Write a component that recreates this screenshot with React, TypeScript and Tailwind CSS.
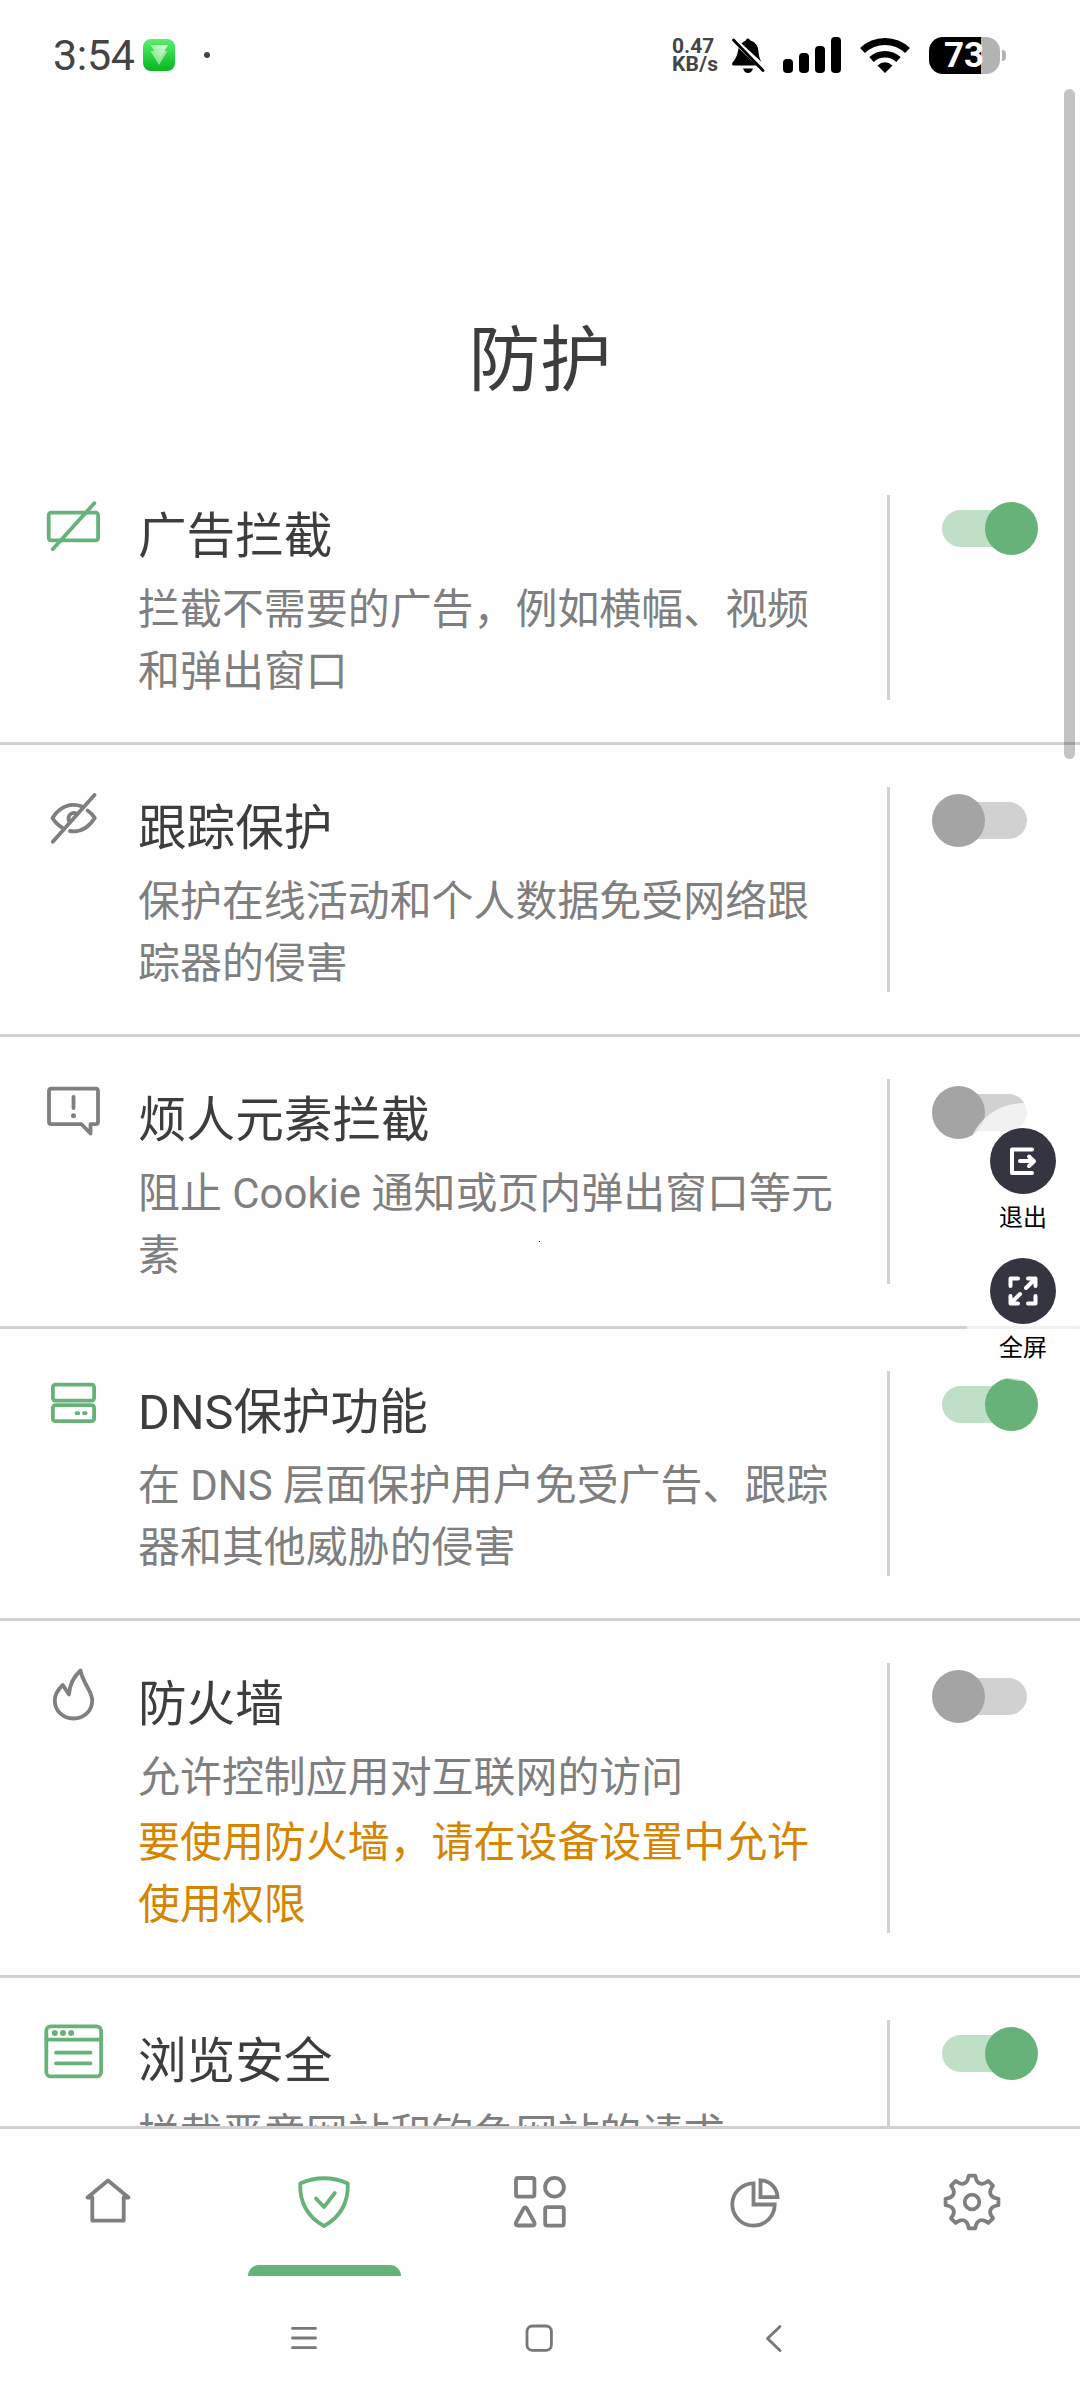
import { useState } from "react";
import type { ReactNode } from "react";

type Protection = {
    id: string;
    title: string;
    text: string;
    warning?: string;
    enabled: boolean;
    icon: ReactNode;
};

// 8 tooth outline, centered on 0,0
const gearPath = Array.from({ length: 8 }, (_, i) => {
    const point = (r: number, deg: number) => {
        const a = ((i * 45 + deg - 90) * Math.PI) / 180;
        return `${(r * Math.cos(a)).toFixed(2)} ${(r * Math.sin(a)).toFixed(2)}`;
    };
    return `${i === 0 ? "M" : "L"}${point(21, -15)} Q${point(22, -11)} ${point(26.6, -7)} L${point(26.6, 7)} Q${point(22, 11)} ${point(21, 15)} Q${point(19.4, 22.5)} ${point(21, 30)}`;
}).join(" ") + "Z";

const protections: Protection[] = [
    {
        id: "ads",
        title: "广告拦截",
        text: "拦截不需要的广告，例如横幅、视频\n和弹出窗口",
        enabled: true,
        icon: (
            <>
                <rect x="4.700" y="15.700" width="49.400" height="27.600" rx="2.500" />
                <path d="M8.700 52.200L50.300 6.200" />
            </>
        ),
    },
    {
        id: "tracking",
        title: "跟踪保护",
        text: "保护在线活动和个人数据免受网络跟\n踪器的侵害",
        enabled: false,
        icon: (
            <>
                <path d="M38 17.5C27 13.5 16 17 8.5 29C11 33 14 36.300 18 38.500" />
                <path d="M43.500 21.500C46.500 23.500 49 26 50.800 29C44 39.500 35.500 43.500 26 42" />
                <path d="M33 25C28.500 22 23 26 25 32" />
                <path d="M8.800 52.800L50.500 6" />
            </>
        ),
    },
    {
        id: "annoyances",
        title: "烦人元素拦截",
        text: "阻止 Cookie 通知或页内弹出窗口等元\n素",
        enabled: false,
        icon: (
            <>
                <path d="M7.500 7.700H51.500Q54 7.700 54 10.200V40.700Q54 43.200 51.500 43.200H46.500V52.500L37.500 43.200H7.500Q5 43.200 5 40.700V10.200Q5 7.700 7.500 7.700Z" />
                <path d="M29.500 16V27" />
                <circle cx="29.500" cy="34.700" r="2.500" fill="currentColor" stroke="none" />
            </>
        ),
    },
    {
        id: "dns",
        title: "DNS保护功能",
        text: "在 DNS 层面保护用户免受广告、跟踪\n器和其他威胁的侵害",
        enabled: true,
        icon: (
            <>
                <rect x="8.900" y="11.600" width="41.200" height="16" rx="2.500" />
                <rect x="8.900" y="32.200" width="41.200" height="16" rx="2.500" />
                <path d="M32.500 40.200H34.200M40 40.200H41.700" />
            </>
        ),
    },
    {
        id: "firewall",
        title: "防火墙",
        text: "允许控制应用对互联网的访问",
        warning: "要使用防火墙，请在设备设置中允许\n使用权限",
        enabled: false,
        icon: (
            <path d="M36.500 5.500C30 11.500 25.500 19.500 25 29.500L18.800 20C13.500 25 10.800 30 10.800 35.500C10.800 46 19 53.500 29.500 53.500C40 53.500 48.200 46 48.200 35.500C48.200 25.500 39.500 20 36.500 5.500Z" />
        ),
    },
    {
        id: "browsing",
        title: "浏览安全",
        text: "拦截恶意网站和钓鱼网站的请求",
        enabled: true,
        icon: (
            <>
                <rect x="2.300" y="4.400" width="54.800" height="50" rx="4.500" />
                <path d="M2.300 17.700H57M12 30.700H46.500M12 41.300H46.500" />
                <g fill="currentColor" stroke="none">
                    <circle cx="10.800" cy="11" r="3" />
                    <circle cx="19" cy="11" r="3" />
                    <circle cx="27.200" cy="11" r="3" />
                </g>
            </>
        ),
    },
];

const tabs: { id: string; icon: ReactNode }[] = [
    {
        id: "home",
        icon: <path d="M-15.700 -4.500H-20.500L0 -21.500L20.500 -4.500H15.700V18.700H-15.700Z" />,
    },
    {
        id: "protection",
        icon: (
            <>
                <path d="M-23.800 -18.500Q0 -29 23.800 -18.500C24.500 1 17 14.500 0 24C-17 14.500 -24.500 1 -23.800 -18.500Z" />
                <path d="M-8 -3.500L0 5L10.800 -9" />
            </>
        ),
    },
    {
        id: "apps",
        icon: (
            <>
                <rect x="-24" y="-24" width="18.400" height="18.600" rx="2" />
                <circle cx="14.500" cy="-14.700" r="9.400" />
                <path d="M-16.600 6.800Q-14.800 3.800 -13 6.800L-5.800 20Q-4.500 23.500 -7.500 23.500H-22Q-25.200 23.500 -23.800 20Z" />
                <rect x="5.200" y="5.100" width="18.600" height="18.500" rx="2" />
            </>
        ),
    },
    {
        id: "stats",
        icon: (
            <g strokeLinejoin="miter">
                <path d="M-2.500 -18.700A21.200 21.200 0 1 0 18.700 2.500H-2.500Z" />
                <path d="M4.500 -21.700A17.300 17.300 0 0 1 21.500 -4.800H4.500Z" />
            </g>
        ),
    },
    {
        id: "settings",
        icon: (
            <>
                <path d={gearPath} />
                <circle r="7.300" />
            </>
        ),
    },
];

function Switch({ on, onClick }: { on: boolean; onClick: () => void }) {
    return (
        <button
            type="button"
            role="switch"
            aria-checked={on}
            onClick={onClick}
            className={`flex items-center w-[85px] h-[37px] rounded-full ${on ? "justify-end bg-[#bfdfc7]" : "justify-start bg-[#d1d1d1]"}`}
        >
            <span className={`w-[53px] h-[53px] shrink-0 rounded-full ${on ? "-mr-[11px] bg-[#67b279]" : "-ml-[10px] bg-[#a4a4a4]"}`} />
        </button>
    );
}

function StatusBar() {
    return (
        <header className="flex items-center h-[110px] pl-[53px] pr-[74px] text-[#444444]">
            <span className="w-[90px] text-[43px] leading-none tracking-[-0.3px]">3:54</span>
            <svg className="w-8 h-8" viewBox="0 0 32 32">
                <defs>
                    <linearGradient id="appBg" x1="0" y1="0" x2="0" y2="1">
                        <stop offset="0" stopColor="#5af06c" />
                        <stop offset="1" stopColor="#05b51e" />
                    </linearGradient>
                    <linearGradient id="arrow" x1="1" y1="0" x2="0.2" y2="1">
                        <stop offset="0" stopColor="#ffffff" />
                        <stop offset="1" stopColor="#7fe98b" />
                    </linearGradient>
                </defs>
                <rect width="32" height="32" rx="8" fill="url(#appBg)" />
                <path d="M7.500 12H24.500L16 26Z" fill="#ffffff" opacity="0.5" />
                <path d="M7.500 6H25L16.500 20.500Z" fill="url(#arrow)" opacity="0.85" />
            </svg>
            <span className="w-1.5 h-1.5 ml-[29px] rounded-full bg-[#444444]" />

            <div className="ml-auto flex items-center">
                <div className="w-[59px] text-[21px] leading-[18.500px] font-bold">
                    <div>0.47</div>
                    <div className="tracking-[0.200px]">KB/s</div>
                </div>
                <svg className="w-[34px] h-9 text-black" viewBox="0 0 34 36" fill="currentColor">
                    <path d="M10.500 6.500Q12.500 4.500 14.500 3.800Q16.500 -0.500 19.500 3.600Q27 6 27.500 15C27.800 19.500 29 22.500 30.500 25Z" />
                    <path d="M7.500 11L25.500 28.500H2.500Q0.300 28 1.500 25.500C4.500 22 6.500 18.500 7.500 11Z" />
                    <path d="M12 31.500H22Q20.500 36 17 36Q13.500 36 12 31.500Z" />
                    <path d="M2.500 3L32 33.500" stroke="currentColor" strokeWidth="2.800" strokeLinecap="round" />
                </svg>
                <div className="flex items-end gap-1.5 ml-[18px] w-[59px] h-9">
                    <span className="w-2.5 h-3.5 rounded-[4px] bg-black" />
                    <span className="w-2.5 h-5 rounded-[4px] bg-black" />
                    <span className="w-2.5 h-[27px] rounded-[4px] bg-black" />
                    <span className="w-2.5 h-9 rounded-[4px] bg-black" />
                </div>
                <svg className="ml-[18px] w-[50px] h-9" viewBox="0 0 50 36" fill="none" stroke="#000000">
                    <path d="M2.500 13.500A32.500 32.500 0 0 1 47.500 13.500" strokeWidth="7" />
                    <path d="M11.500 22.500A20 20 0 0 1 38.500 22.500" strokeWidth="6.500" />
                    <path d="M17.500 28.500Q25 22 32.500 28.500L25 36Z" fill="#000000" stroke="none" />
                </svg>
                <div className="ml-[19px] w-[71px] h-[37px] pr-px rounded-[14px] overflow-hidden bg-linear-to-r from-black from-[73%] to-[#b3b3b3] to-[73%] text-center text-[35px] leading-[38px] font-bold text-white">
                    73
                </div>
                <span className="ml-0.5 w-1 h-[11px] rounded-r-full bg-[#b3b3b3]" />
            </div>
        </header>
    );
}

function ProtectionRow({ item, on, onToggle }: { item: Protection; on: boolean; onToggle: () => void }) {
    return (
        <section className="flex items-stretch py-[42px] border-b-[3px] border-[#d1d1d1]">
            <svg
                className={`ml-11 mt-0.5 w-[60px] h-[60px] shrink-0 ${on ? "text-[#67b279]" : "text-[#7f7f7f]"}`}
                viewBox="0 0 60 60"
                fill="none"
                stroke="currentColor"
                strokeWidth="3.800"
                strokeLinecap="round"
                strokeLinejoin="round"
            >
                {item.icon}
            </svg>
            <div className="ml-[34px] -mb-[3px] w-[749px] shrink-0 whitespace-pre">
                <h2 className="h-[84px] text-[48.600px] leading-[83px] text-[#3d3d3d]">{item.title}</h2>
                <p className="text-[41.950px] leading-[62px] text-[#7f7f7f]">{item.text}</p>
                {item.warning && (
                    <p className="mt-[3px] text-[41.950px] leading-[62px] text-[#d58500]">{item.warning}</p>
                )}
            </div>
            <div className="flex items-start w-[193px] pl-[52px] pt-[15px] border-l-[3px] border-[#d1d1d1]">
                <Switch on={on} onClick={onToggle} />
            </div>
        </section>
    );
}

function FloatingAction({ label, children }: { label: string; children: ReactNode }) {
    return (
        <button type="button" className="flex flex-col items-center shrink-0 h-[130px]">
            <span className="flex items-center justify-center w-[66px] h-[66px] rounded-full bg-[#343541]">
                <svg
                    className="w-[30px] h-[30px]"
                    viewBox="0 0 30 30"
                    fill="none"
                    stroke="#ffffff"
                    strokeWidth="4"
                    strokeLinecap="round"
                    strokeLinejoin="round"
                >
                    {children}
                </svg>
            </span>
            <span className="mt-1.5 text-[24px] leading-[36px] text-black">{label}</span>
        </button>
    );
}

function App() {
    const [enabled, setEnabled] = useState<Record<string, boolean>>(
        Object.fromEntries(protections.map((p) => [p.id, p.enabled]))
    );
    const [activeTab, setActiveTab] = useState("protection");

    function handleToggle(id: string) {
        setEnabled({ ...enabled, [id]: !enabled[id] });
    }

    return (
        <div className="relative flex flex-col w-[1080px] h-[2400px] overflow-hidden bg-[#fefefe] font-[Roboto,'Noto_Sans_CJK_SC',sans-serif]">
            <StatusBar />

            <main className="h-[2016px] overflow-hidden">
                <div className="flex items-end justify-center h-[343px] pb-[42px]">
                    <h1 className="text-[71.500px] leading-[100px] text-[#3d3d3d]">防护</h1>
                </div>
                {protections.map((item) => (
                    <ProtectionRow
                        key={item.id}
                        item={item}
                        on={enabled[item.id]}
                        onToggle={() => handleToggle(item.id)}
                    />
                ))}
            </main>

            <nav className="grid grid-cols-5 h-[150px] border-t-[3px] border-[#d1d1d1]">
                {tabs.map((tab) => (
                    <button
                        key={tab.id}
                        type="button"
                        onClick={() => setActiveTab(tab.id)}
                        className={`flex flex-col items-center justify-between pt-[41px] ${activeTab === tab.id ? "text-[#67b279]" : "text-[#7f7f7f]"}`}
                    >
                        <svg
                            className="mr-px w-16 h-16"
                            viewBox="-32 -32 64 64"
                            fill="none"
                            stroke="currentColor"
                            strokeWidth="3.800"
                            strokeLinecap="round"
                            strokeLinejoin="round"
                        >
                            {tab.icon}
                        </svg>
                        {activeTab === tab.id && <span className="w-[153px] h-[11px] rounded-t-[11px] bg-[#67b279]" />}
                    </button>
                ))}
            </nav>

            {/* System navigation */}
            <footer className="flex items-center justify-center gap-[195px] h-[124px] pr-[3px] text-[#777777]">
                <svg className="w-10 h-10" viewBox="0 0 40 40" fill="none" stroke="currentColor" strokeWidth="2.800" strokeLinecap="round">
                    <path d="M8.500 10.400H31.500M8.500 20H31.500M8.500 29.700H31.500" />
                </svg>
                <svg className="w-10 h-10" viewBox="0 0 40 40" fill="none" stroke="currentColor" strokeWidth="2.800">
                    <rect x="8" y="8" width="24.400" height="24.400" rx="5.500" />
                </svg>
                <svg className="w-10 h-10" viewBox="0 0 40 40" fill="none" stroke="currentColor" strokeWidth="2.800" strokeLinecap="round" strokeLinejoin="round">
                    <path d="M26 8.500L13.500 20.500L26 32.500" />
                </svg>
            </footer>

            {/* Scrollbar */}
            <div className="absolute top-[89px] right-[5px] w-[11px] h-[670px] rounded-full bg-black/23" />
            <div className="absolute top-[1241px] left-[539px] size-px bg-black" />

            {/* Floating game tools */}
            <div className="absolute top-[1103px] right-0 flex flex-col items-center w-[113px] h-[278px] pt-[25px] pr-px rounded-full bg-white/70">
                <FloatingAction label="退出">
                    <path d="M24 3.500H4V27H24" />
                    <path d="M12 15H25M21 10.500L26 15.200L21 20" strokeWidth="4" />
                </FloatingAction>
                <FloatingAction label="全屏">
                    <path d="M2.500 10V2.500H10M27.500 20V27.500H20" />
                    <path d="M18 12L27 3M20 2.500H27.500V10M12 18L3 27M2.500 20V27.500H10" />
                </FloatingAction>
            </div>
        </div>
    );
}

export default App;
